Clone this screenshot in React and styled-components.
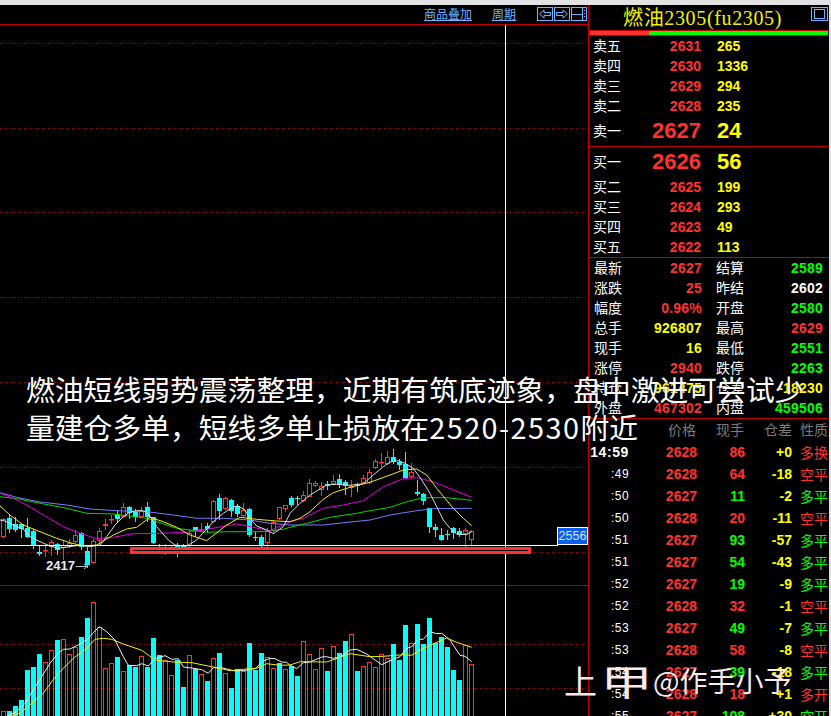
import React from 'react'
import styled, { createGlobalStyle } from 'styled-components'

const RED = '#ff3232'
const GREEN = '#00ff00'
const YELLOW = '#ffff00'
const WHITE = '#ffffff'
const CYAN = '#00ffff'
const LINE = '#c40000'
const LINK = '#6db6ff'
const tone = { r: RED, g: GREEN, y: YELLOW, w: WHITE }

const CJK = '"Noto Sans CJK SC", "Liberation Sans", sans-serif'
const NUM = '"Liberation Sans", "Noto Sans CJK SC", sans-serif'

const GlobalStyle = createGlobalStyle`
  html, body {
    margin: 0;
    background: #000;
    overflow: hidden;
  }
`

const Page = styled.div`
  position: relative;
  width: 831px;
  height: 716px;
  box-sizing: border-box;
  padding: 5px 2px 0 0;
  background: #e2e2e2;
  overflow: hidden;
`
const Main = styled.div`
  display: flex;
  height: 711px;
  background: #000;
`
const ChartPane = styled.div`
  width: 589px;
  box-sizing: border-box;
  border-right: 1px solid ${LINE};
  flex-shrink: 0;
`
const Toolbar = styled.div`
  height: 20px;
  box-sizing: border-box;
  border-bottom: 1px solid ${LINE};
  display: flex;
  align-items: center;
  justify-content: flex-end;
  padding: 0 1px 2px 0;
`
const ToolLink = styled.a`
  font: 12px ${CJK};
  color: ${LINK};
  text-decoration: underline;
  margin-right: ${p => p.$gap}px;
`
const ToolButtons = styled.div`
  display: flex;
  gap: 1px;
`
const ToolButton = styled.svg`
  width: 16px;
  height: 14px;
  fill: none;
  stroke: ${LINK};
  stroke-width: 1;
  display: block;
`
const ChartSvg = styled.svg`
  display: block;
`
const PriceBadge = styled.div`
  position: absolute;
  left: 557px;
  top: 527px;
  width: 31px;
  height: 18px;
  box-sizing: border-box;
  border: 1px solid #fff;
  background: #0a5ff0;
  color: #cfe3ff;
  font: 12.5px/16px ${NUM};
  text-align: center;
`

const Panel = styled.div`
  flex: 1;
  min-width: 0;
  overflow: hidden;
`
const Header = styled.div`
  height: 25px;
  display: flex;
  align-items: flex-start;
  padding: 0 1px 0 34px;
`
const Title = styled.div`
  font: 20px/26px "Liberation Serif", "Noto Sans CJK SC", serif;
  color: #f2f200;
  letter-spacing: 0.65px;
  white-space: nowrap;
`
const MaxButton = styled(ToolButton)`
  margin: 2px 0 0 auto;
  width: 17px;
`
const RatioBar = styled.div`
  height: 4px;
  display: flex;
  border: 1px solid ${LINE};
  border-right-color: #000;
`
const RatioPart = styled.div`
  background: ${p => p.$color};
  width: ${p => p.$w}px;
`
const Divider = styled.div`
  height: 1px;
  background: ${LINE};
`
const QuoteRow = styled.div`
  height: ${p => (p.$big ? 30 : 20)}px;
  display: flex;
  align-items: center;
  padding-left: 4px;
`
const Label = styled.span`
  width: ${p => p.$w || 30}px;
  flex-shrink: 0;
  margin-bottom: 2px;
  font: 14px/20px ${CJK};
  color: ${WHITE};
  white-space: nowrap;
`
const QuotePrice = styled.span`
  width: 78px;
  text-align: right;
  font: bold ${p => (p.$big ? 22 : 14)}px ${NUM};
  color: ${RED};
`
const QuoteSize = styled.span`
  margin-left: 16px;
  font: bold ${p => (p.$big ? 22 : 14)}px ${NUM};
  color: ${YELLOW};
`
const StatRow = styled.div`
  height: 20px;
  display: flex;
  align-items: center;
  padding-left: 5px;
`
const StatValue = styled.span`
  width: ${p => p.$w}px;
  text-align: right;
  font: bold 14px ${NUM};
  letter-spacing: 0.2px;
  color: ${p => tone[p.$c]};
`
const StatLabel2 = styled(Label)`
  margin-left: 14px;
  width: 28px;
`
const TickHead = styled.div`
  height: 22px;
  display: flex;
  align-items: center;
  padding-bottom: 2px;
  box-sizing: border-box;
  font: 14px ${CJK};
  color: #7c7c7c;
  white-space: nowrap;
`
const HeadCell = styled.span`
  width: ${p => p.$w}px;
  text-align: right;
`
const HeadKind = styled.span`
  margin-left: 8px;
`
const TickRow = styled.div`
  height: 22px;
  display: flex;
  align-items: center;
`
const TickCell = styled.span`
  width: ${p => p.$w}px;
  text-align: right;
  font: bold 14px ${NUM};
  color: ${p => tone[p.$c]};
`
const TickTime = styled.span`
  width: 40px;
  text-align: right;
  color: ${WHITE};
  font: ${p => (p.$full ? 'bold 14px' : '12px')} ${NUM};
  letter-spacing: ${p => (p.$full ? 0.6 : 0.4)}px;
`
const TickKind = styled.span`
  margin-left: 8px;
  font: 14px ${CJK};
  white-space: nowrap;
  color: ${p => tone[p.$c]};
`

const Caption = styled.div`
  position: absolute;
  left: 26px;
  top: 370px;
  width: 790px;
  font: 28.8px/38px ${CJK};
  color: #fff;
  text-shadow: 0 0 2px rgba(0, 0, 0, 0.5);
`
const CaptionDigits = styled.span`
  letter-spacing: 1.5px;
`
const Watermark = styled.div`
  position: absolute;
  left: 564px;
  top: 660px;
  height: 40px;
  display: flex;
  align-items: center;
  color: #fbe9ec;
  white-space: nowrap;
`
const MarkUp = styled.span`
  width: 34px;
  font: 33px/40px ${CJK};
`
const MarkFirst = styled.span`
  width: 39px;
  margin-left: 9px;
  text-align: center;
  font: 36px/40px ${CJK};
  transform: scaleX(1.45);
`
const MarkName = styled.span`
  margin-left: 7px;
  font: 28px/40px ${CJK};
`

// [top, bottom, wickTop, wickBottom, kind] in 3x crop units, y0 = 440
const candles = [
  [237,291,235,295,'r'],[233,267,222,280,'c'],[253,270,232,275,'c'],[251,268,250,295,'c'],[264,291,235,295,'c'],
  [273,319,268,326,'c'],[337,341,316,348,'c'],[331,333,318,352,'r'],[307,322,300,348,'r'],[313,330,308,345,'c'],
  [315,325,300,360,'r'],[308,322,298,325,'r'],[286,306,270,310,'r'],[278,320,275,330,'c'],[333,375,320,385,'c'],
  [304,368,298,372,'r'],[273,303,265,308,'r'],[253,257,236,270,'r'],[236,238,225,252,'r'],[223,236,210,250,'c'],
  [200,232,190,235,'r'],[202,218,198,236,'c'],[215,231,208,245,'c'],[213,231,200,235,'r'],[202,231,186,245,'c'],
  [232,309,230,312,'c'],[330,333,312,336,'c'],[324,327,312,345,'r'],[322,325,315,340,'r'],[315,320,308,350,'c'],
  [316,320,312,335,'c'],[278,318,268,320,'r'],[262,272,262,290,'c'],[267,270,248,275,'r'],[258,268,250,280,'c'],
  [184,245,180,248,'r'],[175,213,162,240,'c'],[175,206,170,210,'r'],[180,213,178,230,'c'],[198,222,192,230,'c'],
  [210,227,190,232,'r'],[208,285,205,290,'c'],[290,295,275,302,'c'],[292,317,285,330,'c'],[272,310,265,320,'r'],
  [246,272,240,278,'r'],[202,236,200,240,'r'],[196,208,195,215,'r'],[174,196,168,200,'c'],[174,178,168,195,'c'],
  [166,182,153,185,'r'],[130,170,118,172,'r'],[130,137,122,140,'r'],[137,150,127,167,'r'],[133,138,122,150,'c'],
  [124,132,105,135,'r'],[118,136,102,145,'c'],[127,139,120,165,'c'],[138,145,120,170,'r'],[136,138,130,156,'c'],
  [115,128,105,130,'r'],[97,129,88,132,'r'],[64,83,58,88,'r'],[65,67,40,80,'r'],[52,72,33,75,'r'],
  [52,65,27,72,'c'],[65,74,58,90,'c'],[72,113,36,115,'c'],[96,110,70,115,'r'],[157,161,120,168,'c'],
  [162,184,160,195,'c'],[204,261,204,278,'c'],[261,270,252,290,'c'],[286,300,265,302,'c'],[282,284,270,300,'c'],
  [265,280,262,298,'c'],[274,284,265,290,'c'],[271,283,265,320,'r'],[274,300,270,315,'r'],
]

// [top, kind] in 3x crop units, y0 = 580
const volumes = [
  [394,'r'],[393,'c'],[378,'c'],[360,'c'],[270,'c'],[261,'c'],[222,'c'],[247,'r'],[211,'r'],[180,'c'],
  [178,'r'],[223,'r'],[202,'r'],[171,'c'],[114,'c'],[67,'r'],[140,'r'],[265,'r'],[250,'r'],[231,'c'],
  [274,'r'],[255,'c'],[261,'c'],[229,'r'],[261,'c'],[174,'c'],[225,'c'],[240,'r'],[286,'r'],[240,'c'],
  [321,'c'],[226,'r'],[268,'c'],[283,'r'],[303,'c'],[235,'r'],[219,'c'],[280,'r'],[324,'c'],[268,'c'],
  [273,'r'],[189,'c'],[270,'c'],[219,'c'],[232,'r'],[265,'r'],[249,'c'],[267,'r'],[258,'c'],[288,'c'],
  [184,'r'],[223,'r'],[268,'r'],[205,'r'],[273,'c'],[199,'r'],[219,'c'],[183,'c'],[163,'r'],[273,'c'],
  [259,'r'],[247,'r'],[262,'r'],[223,'r'],[235,'r'],[192,'c'],[240,'c'],[135,'c'],[190,'r'],[132,'c'],
  [192,'c'],[114,'c'],[189,'c'],[171,'c'],[201,'c'],[270,'c'],[300,'c'],[195,'r'],[253,'r'],
]

const toPts = (a, b, y0) =>
  [...a.map(([x, y]) => `${(x / 3).toFixed(1)},${(y0 + y / 3).toFixed(1)}`),
   ...b.map(([x, y]) => `${(290 + x / 3).toFixed(1)},${(y0 + y / 3).toFixed(1)}`)].join(' ')

const maLines = [
  { color: '#7a78ff', pts: toPts(
    [[0,158],[50,172],[120,186],[200,195],[270,207],[350,212],[440,215],[520,225],[590,235],[670,235],[750,240],[810,250]],
    [[0,255],[100,255],[180,246],[240,240],[300,225],[380,212],[430,206],[545,205]], 440) },
  { color: '#00d800', pts: toPts(
    [[0,170],[50,176],[120,190],[200,205],[260,220],[340,222],[440,235],[530,265],[620,277],[690,275],[780,275],[850,268]],
    [[0,262],[50,250],[120,232],[200,220],[240,212],[300,202],[350,185],[400,173],[470,173],[545,181]], 440) },
  { color: '#e000e0', pts: toPts(
    [[0,160],[40,175],[80,195],[130,225],[190,260],[240,280],[290,296],[340,292],[400,281],[480,280],[560,277],[620,268],[710,252],[760,262],[810,272],[860,250]],
    [[0,245],[40,235],[100,205],[160,195],[220,182],[280,140],[340,116],[380,113],[430,125],[490,150],[545,172]], 440) },
  { color: '#f0f000', pts: toPts(
    [[0,198],[30,225],[70,255],[120,275],[170,295],[210,308],[250,318],[290,315],[340,285],[380,267],[410,262],[450,232],[490,245],[530,262],[570,285],[620,302],[680,255],[720,232],[770,238],[830,243]],
    [[0,245],[30,235],[60,215],[100,178],[130,158],[180,142],[240,127],[300,105],[340,90],[380,87],[410,105],[440,145],[490,205],[520,235],[545,257]], 440) },
  { color: '#d8d8d8', pts: toPts(
    [[0,240],[15,243],[40,255],[70,268],[90,290],[120,305],[150,318],[175,325],[210,320],[240,315],[270,320],[300,315],[320,290],[345,255],[370,230],[390,216],[420,211],[440,215],[470,260],[505,300],[525,315],[560,318],[590,300],[640,245],[670,220],[700,200],[715,198],[735,210],[750,235],[770,258],[800,270],[820,281],[850,260]],
    [[0,220],[30,190],[60,165],[90,147],[110,135],[140,133],[180,136],[220,131],[250,105],[280,80],[300,66],[325,62],[345,70],[370,85],[395,120],[420,160],[440,200],[460,240],[480,265],[500,282],[530,284],[545,275]], 440) },
]

const volLines = [
  { color: '#f0f0f0', pts: toPts(
    [[20,408],[50,395],[75,370],[100,330],[125,290],[150,250],[170,225],[190,208],[210,207],[240,192],[262,178],[280,158],[298,140],[320,155],[345,180],[370,230],[385,256],[410,257],[425,251],[445,258],[465,236],[495,227],[515,238],[535,236],[550,261],[575,264],[605,269],[625,280],[640,263],[665,263],[700,272],[730,272],[765,266],[790,243],[810,235],[825,236],[845,246],[860,247]],
    [[0,256],[20,266],[40,248],[60,246],[95,231],[110,230],[130,235],[150,232],[180,210],[200,208],[230,222],[275,254],[300,242],[330,230],[350,205],[365,200],[385,178],[400,178],[420,155],[440,161],[455,160],[480,180],[510,226],[525,229],[545,245]], 580) },
  { color: '#f0f000', pts: toPts(
    [[30,408],[60,400],[95,370],[130,340],[170,285],[220,235],[260,205],[285,178],[310,175],[335,178],[370,192],[425,211],[465,240],[490,243],[520,246],[575,248],[640,261],[690,272],[730,268],[770,265],[800,251],[840,256]],
    [[0,255],[30,245],[110,246],[180,221],[240,230],[280,229],[340,224],[365,226],[400,205],[470,174],[500,187],[545,202]], 580) },
]

const dotted = [43, 128, 212, 297, 382, 467, 552, 644, 688]

const Candle = ({ i, c }) => {
  const [top, bottom, wickTop, wickBottom, kind] = c
  const y = v => Math.round(440 + v / 3)
  const mid = 3.5 + 6 * i
  const color = kind === 'r' ? RED : CYAN
  const h = Math.max(y(bottom) - y(top), 1)
  return (
    <g>
      <line x1={mid} x2={mid} y1={y(wickTop)} y2={y(wickBottom)} stroke={color} />
      {kind === 'r'
        ? <rect x={mid - 2} y={y(top) + 0.5} width={4} height={h - 1 > 0 ? h - 1 : 0.5} fill="#000" stroke={RED} />
        : <rect x={mid - 2.5} y={y(top)} width={5} height={h} fill={CYAN} />}
    </g>
  )
}

const Chart = () => (
  <ChartSvg width="588" height="691" viewBox="0 25 588 691">
    {dotted.map(y => (
      <line key={y} x1="0" x2="588" y1={y + 0.5} y2={y + 0.5} stroke="#b00000" strokeDasharray="1 2" />
    ))}
    <line x1="0" x2="588" y1="585.5" y2="585.5" stroke="#b00000" />
    {candles.map((c, i) => <Candle key={i} i={i} c={c} />)}
    {maLines.map(l => <polyline key={l.color} points={l.pts} fill="none" stroke={l.color} strokeWidth="1" />)}
    {volumes.map(([top, kind], i) => {
      const y = Math.round(580 + top / 3)
      return kind === 'r'
        ? <rect key={i} x={1.5 + 6 * i} y={y + 0.5} width={4} height={716 - y} fill="#000" stroke={RED} />
        : <rect key={i} x={1 + 6 * i} y={y} width={5} height={716 - y} fill={CYAN} />
    })}
    {volLines.map(l => <polyline key={l.color} points={l.pts} fill="none" stroke={l.color} strokeWidth="1" />)}
    <line x1="0" x2="558" y1="545.5" y2="545.5" stroke="#fff" />
    <line x1="505.5" x2="505.5" y1="25" y2="716" stroke="#fff" />
    <rect x="131.5" y="548.5" width="398" height="4" fill="#000" stroke={RED} strokeWidth="3" />
    <text x="46" y="570" fontFamily={NUM} fontSize="13" fontWeight="bold" fill="#e6eef5">2417</text>
    <path d="M76 566.5H87M84 564l3 2.5-3 2.5" fill="none" stroke="#b8c4cc" />
  </ChartSvg>
)

const asks = [['卖五','2631','265'],['卖四','2630','1336'],['卖三','2629','294'],['卖二','2628','235']]
const bids = [['买二','2625','199'],['买三','2624','293'],['买四','2623','49'],['买五','2622','113']]
const stats = [
  ['最新','2627','r','结算','2589','g'],
  ['涨跌','25','r','昨结','2602','w'],
  ['幅度','0.96%','r','开盘','2580','g'],
  ['总手','926807','y','最高','2629','r'],
  ['现手','16','y','最低','2551','g'],
  ['涨停','2940','r','跌停','2263','g'],
  ['持仓','961475','y','仓差','-18230','y'],
  ['外盘','467302','r','内盘','459506','g'],
]
const ticks = [
  ['14:59','2628','r','86','r','+0','多换','r'],
  [':49','2628','r','64','r','-18','空平','r'],
  [':50','2627','r','11','g','-2','多平','g'],
  [':50','2628','r','20','r','-11','空平','r'],
  [':51','2627','r','93','g','-57','多平','g'],
  [':51','2627','r','54','g','-43','多平','g'],
  [':52','2627','r','19','g','-9','多平','g'],
  [':52','2628','r','32','r','-1','空平','r'],
  [':53','2627','r','49','g','-7','多平','g'],
  [':53','2628','r','58','r','-8','空平','r'],
  [':54','2627','r','39','g','-18','多平','g'],
  [':54','2628','r','18','r','+1','多开','r'],
  [':55','2627','r','108','g','+30','空开','g'],
]

const Quote = ({ row, big }) => (
  <QuoteRow $big={big}>
    <Label>{row[0]}</Label>
    <QuotePrice $big={big}>{row[1]}</QuotePrice>
    <QuoteSize $big={big}>{row[2]}</QuoteSize>
  </QuoteRow>
)

const App = () => (
  <Page>
    <GlobalStyle />
    <Main>
      <ChartPane>
        <Toolbar>
          <ToolLink $gap={20}>商品叠加</ToolLink>
          <ToolLink $gap={21}>周期</ToolLink>
          <ToolButtons>
            <ToolButton viewBox="0 0 16 14">
              <rect x="0.5" y="0.5" width="15" height="13" />
              <path d="M2.5 7L7 3v2.5h6.5v3H7V11z" />
            </ToolButton>
            <ToolButton viewBox="0 0 16 14">
              <rect x="0.5" y="0.5" width="15" height="13" />
              <path d="M13.5 7L9 3v2.5H2.5v3H9V11z" />
            </ToolButton>
            <ToolButton viewBox="0 0 16 14">
              <rect x="0.5" y="0.5" width="15" height="13" />
              <path d="M11.5 1v12M1 7.5h10.5M13.5 3v1M13.5 6v1M13.5 9v1" />
            </ToolButton>
          </ToolButtons>
        </Toolbar>
        <Chart />
      </ChartPane>
      <Panel>
        <Header>
          <Title>燃油2305(fu2305)</Title>
          <MaxButton viewBox="0 0 17 14">
            <rect x="0.5" y="0.5" width="16" height="13" />
            <rect x="3.5" y="2.5" width="10" height="9" />
          </MaxButton>
        </Header>
        <RatioBar>
          <RatioPart $color={RED} $w={59} />
          <RatioPart $color={GREEN} $w={179} />
        </RatioBar>
        {asks.map(r => <Quote key={r[0]} row={r} />)}
        <Quote row={['卖一', '2627', '24']} big />
        <Divider />
        <Quote row={['买一', '2626', '56']} big />
        {bids.map(r => <Quote key={r[0]} row={r} />)}
        <Divider />
        {stats.map(s => (
          <StatRow key={s[0]}>
            <Label $w={28}>{s[0]}</Label>
            <StatValue $w={80} $c={s[2]}>{s[1]}</StatValue>
            <StatLabel2>{s[3]}</StatLabel2>
            <StatValue $w={79} $c={s[5]}>{s[4]}</StatValue>
          </StatRow>
        ))}
        <Divider />
        <TickHead>
          <HeadCell $w={107}>价格</HeadCell>
          <HeadCell $w={48}>现手</HeadCell>
          <HeadCell $w={48}>仓差</HeadCell>
          <HeadKind>性质</HeadKind>
        </TickHead>
        {ticks.map((t, i) => (
          <TickRow key={i}>
            <TickTime $full={i === 0}>{t[0]}</TickTime>
            <TickCell $w={68} $c={t[2]}>{t[1]}</TickCell>
            <TickCell $w={48} $c={t[4]}>{t[3]}</TickCell>
            <TickCell $w={47} $c="y">{t[5]}</TickCell>
            <TickKind $c={t[7]}>{t[6]}</TickKind>
          </TickRow>
        ))}
      </Panel>
    </Main>
    <PriceBadge>2556</PriceBadge>
    <Caption>
      燃油短线弱势震荡整理，近期有筑底迹象，盘中激进可尝试少<br />
      量建仓多单，短线多单止损放在<CaptionDigits>2520-2530</CaptionDigits>附近
    </Caption>
    <Watermark>
      <MarkUp>上</MarkUp>
      <MarkFirst>甲</MarkFirst>
      <MarkName>@作手小予</MarkName>
    </Watermark>
  </Page>
)

export default App
